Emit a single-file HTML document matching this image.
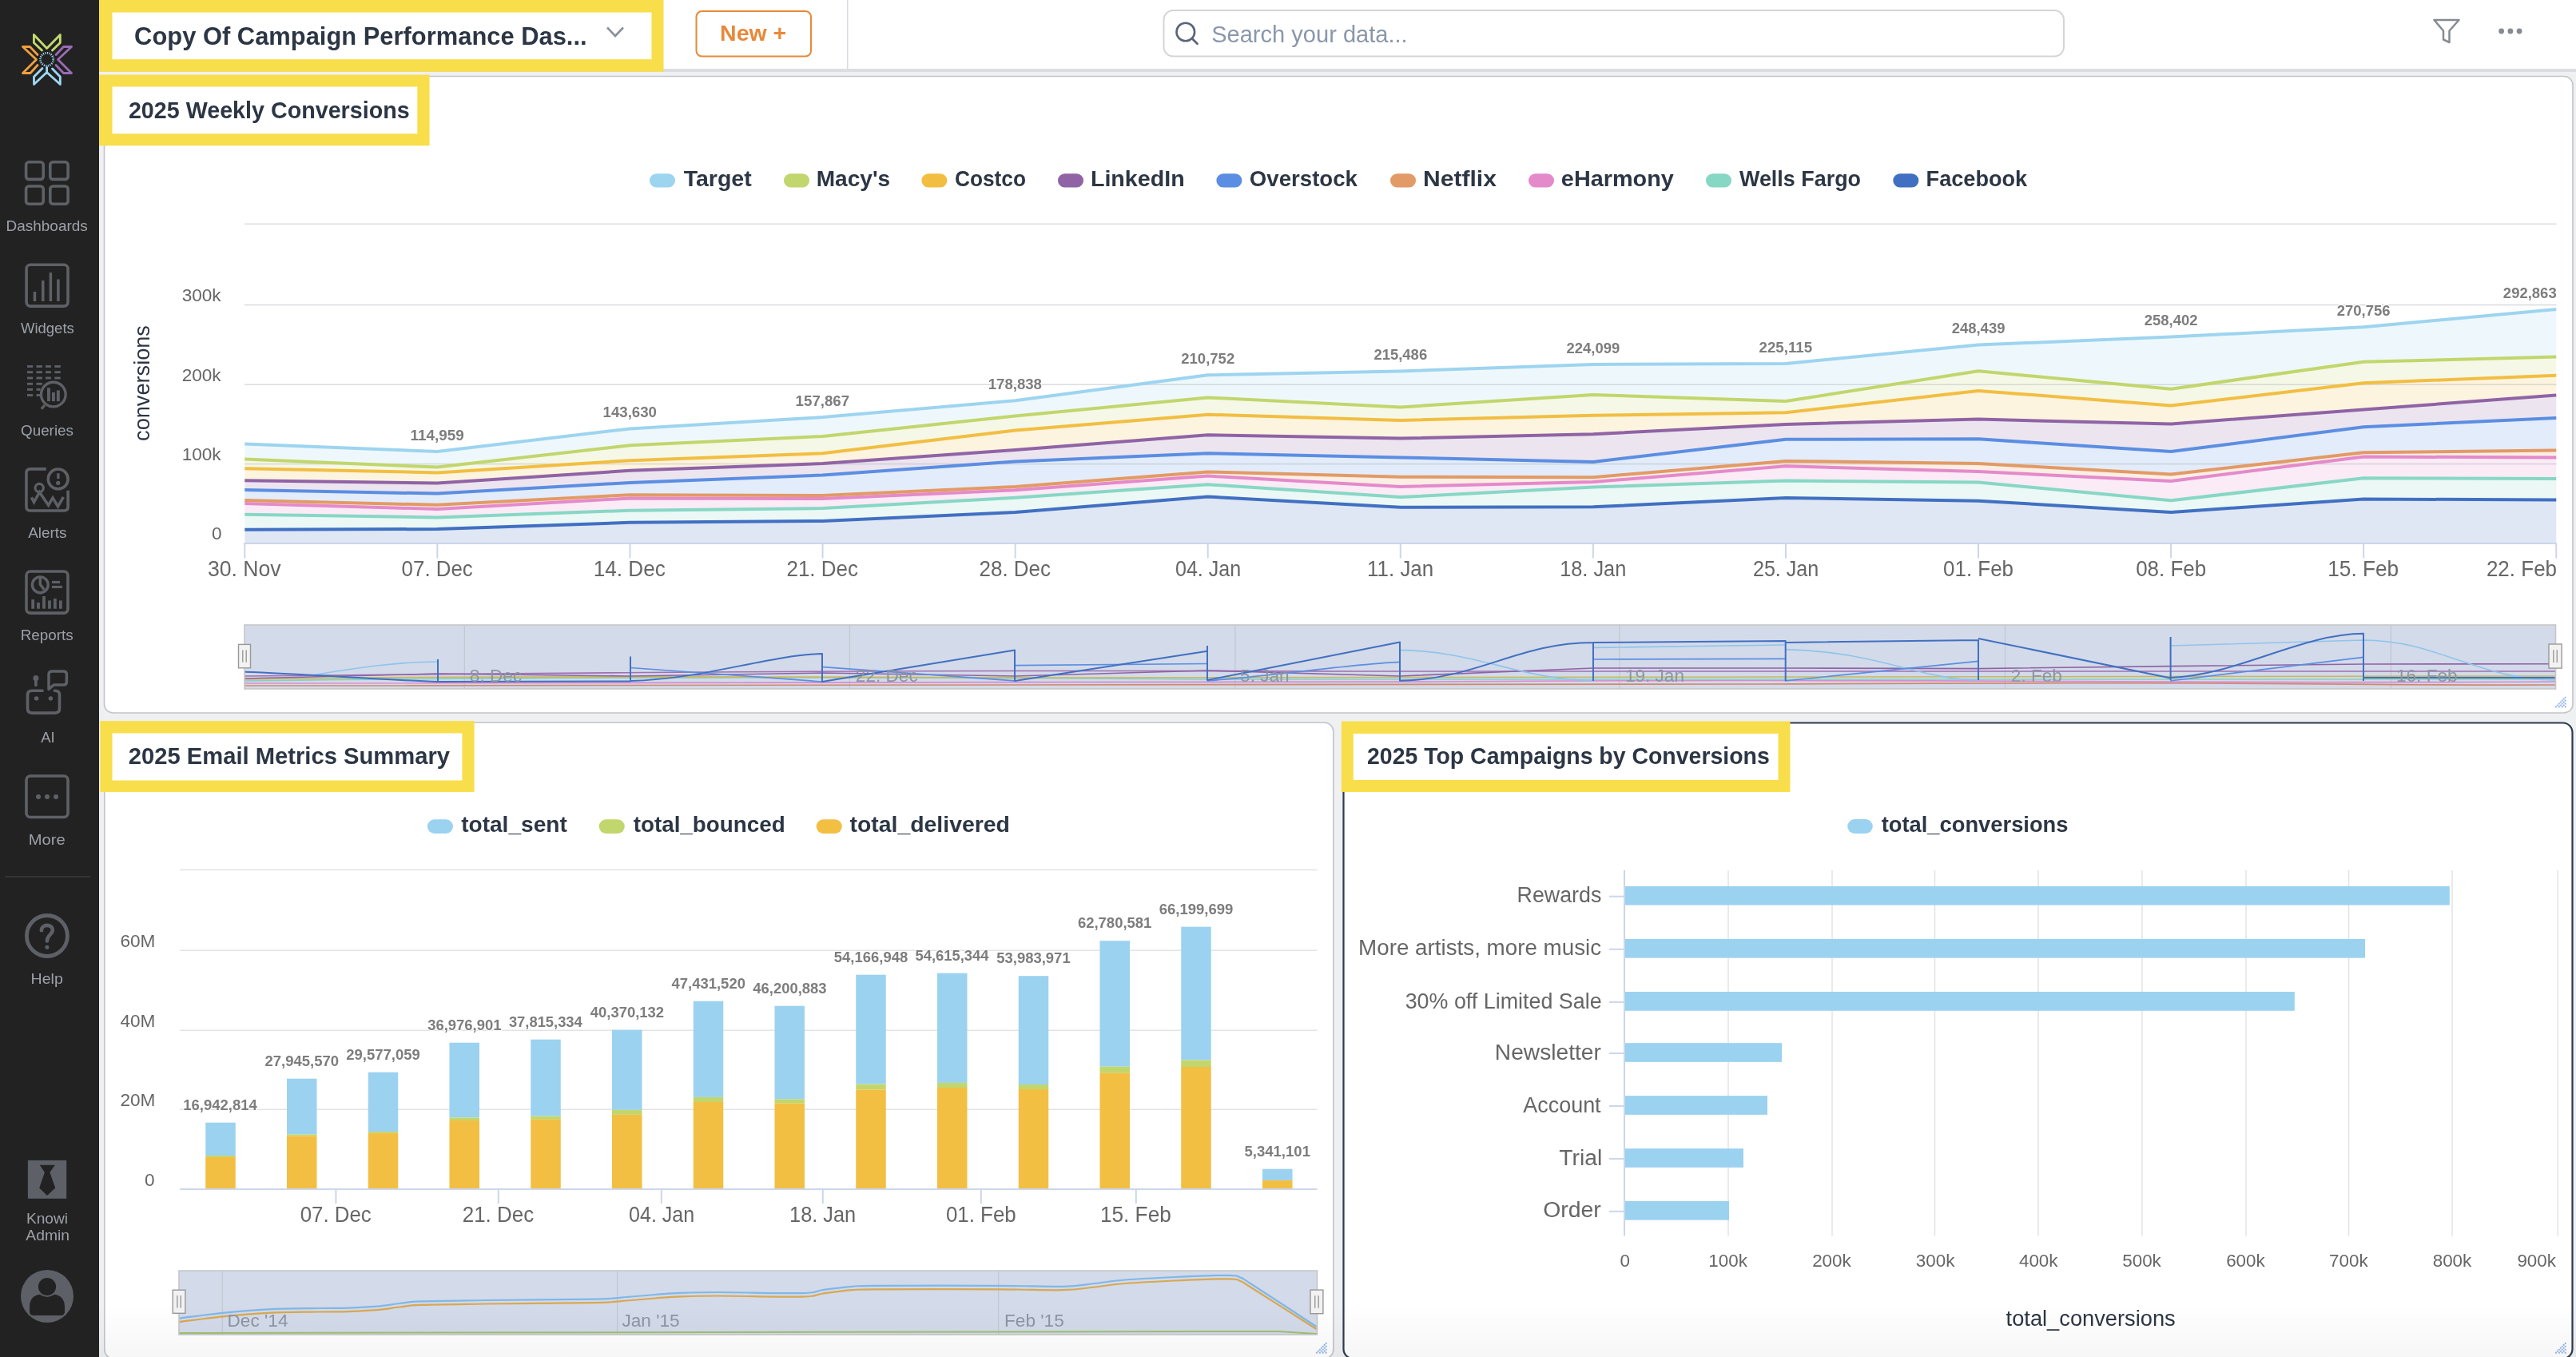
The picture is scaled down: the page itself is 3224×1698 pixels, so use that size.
<!DOCTYPE html><html><head><meta charset="utf-8"><title>Knowi Dashboard</title><style>html,body{margin:0;padding:0;background:#eff0f2;overflow:hidden;width:3224px;height:1698px}svg{display:block;will-change:transform}text{font-family:"Liberation Sans",sans-serif}</style></head><body><svg width="3224" height="1698" viewBox="0 0 3224 1698" font-family="Liberation Sans, sans-serif"><rect x="0.00" y="0.00" width="3224.00" height="1698.00" fill="#eff0f2" />
<rect x="124.00" y="0.00" width="3100.00" height="86.00" fill="#ffffff" />
<rect x="124.00" y="86.00" width="3100.00" height="4.00" fill="#dcdde1" />
<line x1="1060.75" y1="0.00" x2="1060.75" y2="86.00" stroke="#d9dadf" stroke-width="1.50" />
<rect x="130.5" y="95.5" width="3089.5" height="796.5" rx="11" fill="#fff" stroke="#c3c4c9" stroke-width="1.6"/>
<rect x="130.8" y="904.3" width="1538" height="795.5" rx="11" fill="#fff" stroke="#c3c4c9" stroke-width="1.6"/>
<rect x="1681.5" y="904.5" width="1538" height="795.5" rx="12" fill="#fff" stroke="#2e3b4e" stroke-width="2.2"/>
<rect x="124.00" y="0.00" width="706.50" height="89.80" fill="#f8de4b" />
<rect x="140.50" y="15.50" width="675.00" height="58.70" fill="#ffffff" />
<rect x="124.00" y="93.50" width="413.50" height="88.80" fill="#f8de4b" />
<rect x="140.50" y="108.50" width="381.80" height="58.80" fill="#ffffff" />
<rect x="125.30" y="902.10" width="468.30" height="89.00" fill="#f8de4b" />
<rect x="140.50" y="917.50" width="437.90" height="59.00" fill="#ffffff" />
<rect x="1678.80" y="902.50" width="561.70" height="88.50" fill="#f8de4b" />
<rect x="1693.75" y="918.00" width="531.75" height="58.00" fill="#ffffff" />
<text x="168.13" y="55.90" font-size="30.80" font-weight="bold" fill="#2c3644" textLength="566.49" lengthAdjust="spacingAndGlyphs">Copy Of Campaign Performance Das...</text>
<polyline points="760,34.5 770,45 780,34.5" fill="none" stroke="#8a9099" stroke-width="2.6"/>
<rect x="871.5" y="14" width="143.5" height="56.5" rx="7" fill="#fff" stroke="#e8893a" stroke-width="2"/>
<text x="901.10" y="51.00" font-size="27.50" font-weight="bold" fill="#e8893a" textLength="83.06" lengthAdjust="spacingAndGlyphs">New +</text>
<rect x="1456.5" y="13" width="1126.5" height="57.5" rx="12" fill="#fff" stroke="#d5d5d5" stroke-width="2"/>
<circle cx="1483.8" cy="40" r="11.3" fill="none" stroke="#5b6579" stroke-width="2.6"/>
<line x1="1492.00" y1="48.30" x2="1498.50" y2="54.70" stroke="#5b6579" stroke-width="2.80" stroke-linecap="round"/>
<text x="1516.18" y="53.00" font-size="29.00" fill="#8a97ab" textLength="245.47" lengthAdjust="spacingAndGlyphs">Search your data...</text>
<path d="M3046.5,25 L3077.5,25 L3065.5,38.5 L3065.5,53 L3058,49.5 L3058,38.5 Z" fill="none" stroke="#868b93" stroke-width="2.5" stroke-linejoin="round"/>
<circle cx="3130.6" cy="39" r="3.4" fill="#868b93"/>
<circle cx="3141.9" cy="39" r="3.4" fill="#868b93"/>
<circle cx="3153.1" cy="39" r="3.4" fill="#868b93"/>
<text x="160.91" y="147.90" font-size="28.90" font-weight="bold" fill="#2c3644" textLength="351.77" lengthAdjust="spacingAndGlyphs">2025 Weekly Conversions</text>
<text x="160.69" y="956.00" font-size="28.90" font-weight="bold" fill="#2c3644" textLength="402.37" lengthAdjust="spacingAndGlyphs">2025 Email Metrics Summary</text>
<text x="1711.02" y="956.20" font-size="28.90" font-weight="bold" fill="#2c3644" textLength="503.74" lengthAdjust="spacingAndGlyphs">2025 Top Campaigns by Conversions</text>
<rect x="813.0" y="217.3" width="32" height="17.2" rx="8.6" fill="#9dd4f0"/>
<text x="855.69" y="232.90" font-size="28.40" font-weight="bold" fill="#2c3644" textLength="85.05" lengthAdjust="spacingAndGlyphs">Target</text>
<rect x="981.0" y="217.3" width="32" height="17.2" rx="8.6" fill="#c1d66c"/>
<text x="1021.72" y="232.90" font-size="28.40" font-weight="bold" fill="#2c3644" textLength="92.43" lengthAdjust="spacingAndGlyphs">Macy&#x27;s</text>
<rect x="1153.4" y="217.3" width="32" height="17.2" rx="8.6" fill="#f2be42"/>
<text x="1194.92" y="232.90" font-size="28.40" font-weight="bold" fill="#2c3644" textLength="89.11" lengthAdjust="spacingAndGlyphs">Costco</text>
<rect x="1324.0" y="217.3" width="32" height="17.2" rx="8.6" fill="#9063a5"/>
<text x="1364.88" y="232.90" font-size="28.40" font-weight="bold" fill="#2c3644" textLength="117.90" lengthAdjust="spacingAndGlyphs">LinkedIn</text>
<rect x="1522.4" y="217.3" width="32" height="17.2" rx="8.6" fill="#5b8ee2"/>
<text x="1563.87" y="232.90" font-size="28.40" font-weight="bold" fill="#2c3644" textLength="135.11" lengthAdjust="spacingAndGlyphs">Overstock</text>
<rect x="1740.0" y="217.3" width="32" height="17.2" rx="8.6" fill="#e29a66"/>
<text x="1780.99" y="232.90" font-size="28.40" font-weight="bold" fill="#2c3644" textLength="91.93" lengthAdjust="spacingAndGlyphs">Netflix</text>
<rect x="1913.0" y="217.3" width="32" height="17.2" rx="8.6" fill="#e48acb"/>
<text x="1953.87" y="232.90" font-size="28.40" font-weight="bold" fill="#2c3644" textLength="140.98" lengthAdjust="spacingAndGlyphs">eHarmony</text>
<rect x="2135.0" y="217.3" width="32" height="17.2" rx="8.6" fill="#87d7c5"/>
<text x="2176.97" y="232.90" font-size="28.40" font-weight="bold" fill="#2c3644" textLength="152.07" lengthAdjust="spacingAndGlyphs">Wells Fargo</text>
<rect x="2369.3" y="217.3" width="32" height="17.2" rx="8.6" fill="#4170c2"/>
<text x="2410.59" y="232.90" font-size="28.40" font-weight="bold" fill="#2c3644" textLength="126.59" lengthAdjust="spacingAndGlyphs">Facebook</text>
<line x1="306.00" y1="280.30" x2="3199.50" y2="280.30" stroke="#e3e3e3" stroke-width="1.50" />
<line x1="306.00" y1="381.60" x2="3199.50" y2="381.60" stroke="#e3e3e3" stroke-width="1.50" />
<line x1="306.00" y1="481.30" x2="3199.50" y2="481.30" stroke="#e3e3e3" stroke-width="1.50" />
<line x1="306.00" y1="580.60" x2="3199.50" y2="580.60" stroke="#e3e3e3" stroke-width="1.50" />
<polygon points="306.30,555.50 547.38,565.00 788.46,536.40 1029.54,522.10 1270.62,501.20 1511.70,469.20 1752.78,464.50 1993.86,455.90 2234.94,454.90 2476.02,431.60 2717.10,421.60 2958.18,409.20 3199.26,387.10 3199.26,446.50 2958.18,452.80 2717.10,486.70 2476.02,464.30 2234.94,502.10 1993.86,494.00 1752.78,509.40 1511.70,497.50 1270.62,520.50 1029.54,545.90 788.46,557.30 547.38,584.60 306.30,574.40" fill="#9dd4f0" fill-opacity="0.17"/>
<polygon points="306.30,574.40 547.38,584.60 788.46,557.30 1029.54,545.90 1270.62,520.50 1511.70,497.50 1752.78,509.40 1993.86,494.00 2234.94,502.10 2476.02,464.30 2717.10,486.70 2958.18,452.80 3199.26,446.50 3199.26,469.80 2958.18,479.20 2717.10,507.50 2476.02,488.90 2234.94,516.30 1993.86,519.80 1752.78,526.00 1511.70,518.70 1270.62,538.60 1029.54,567.30 788.46,576.20 547.38,591.40 306.30,586.30" fill="#c1d66c" fill-opacity="0.17"/>
<polygon points="306.30,586.30 547.38,591.40 788.46,576.20 1029.54,567.30 1270.62,538.60 1511.70,518.70 1752.78,526.00 1993.86,519.80 2234.94,516.30 2476.02,488.90 2717.10,507.50 2958.18,479.20 3199.26,469.80 3199.26,494.60 2958.18,512.50 2717.10,530.50 2476.02,524.60 2234.94,530.90 1993.86,543.20 1752.78,548.50 1511.70,544.30 1270.62,563.10 1029.54,580.00 788.46,588.80 547.38,604.60 306.30,601.20" fill="#f2be42" fill-opacity="0.17"/>
<polygon points="306.30,601.20 547.38,604.60 788.46,588.80 1029.54,580.00 1270.62,563.10 1511.70,544.30 1752.78,548.50 1993.86,543.20 2234.94,530.90 2476.02,524.60 2717.10,530.50 2958.18,512.50 3199.26,494.60 3199.26,523.00 2958.18,534.30 2717.10,565.10 2476.02,549.30 2234.94,549.80 1993.86,578.00 1752.78,572.40 1511.70,567.30 1270.62,577.50 1029.54,594.50 788.46,603.90 547.38,617.60 306.30,613.10" fill="#9063a5" fill-opacity="0.17"/>
<polygon points="306.30,613.10 547.38,617.60 788.46,603.90 1029.54,594.50 1270.62,577.50 1511.70,567.30 1752.78,572.40 1993.86,578.00 2234.94,549.80 2476.02,549.30 2717.10,565.10 2958.18,534.30 3199.26,523.00 3199.26,563.60 2958.18,566.20 2717.10,593.50 2476.02,580.00 2234.94,576.90 1993.86,597.20 1752.78,596.70 1511.70,590.50 1270.62,608.90 1029.54,620.00 788.46,619.20 547.38,631.80 306.30,626.10" fill="#5b8ee2" fill-opacity="0.17"/>
<polygon points="306.30,626.10 547.38,631.80 788.46,619.20 1029.54,620.00 1270.62,608.90 1511.70,590.50 1752.78,596.70 1993.86,597.20 2234.94,576.90 2476.02,580.00 2717.10,593.50 2958.18,566.20 3199.26,563.60 3199.26,572.50 2958.18,571.50 2717.10,601.90 2476.02,590.10 2234.94,583.30 1993.86,603.00 1752.78,608.90 1511.70,595.60 1270.62,613.30 1029.54,624.00 788.46,623.40 547.38,637.00 306.30,630.10" fill="#e29a66" fill-opacity="0.17"/>
<polygon points="306.30,630.10 547.38,637.00 788.46,623.40 1029.54,624.00 1270.62,613.30 1511.70,595.60 1752.78,608.90 1993.86,603.00 2234.94,583.30 2476.02,590.10 2717.10,601.90 2958.18,571.50 3199.26,572.50 3199.26,599.00 2958.18,598.30 2717.10,626.30 2476.02,603.40 2234.94,601.60 1993.86,609.50 1752.78,622.10 1511.70,606.30 1270.62,622.80 1029.54,636.00 788.46,638.70 547.38,647.40 306.30,643.70" fill="#e48acb" fill-opacity="0.17"/>
<polygon points="306.30,643.70 547.38,647.40 788.46,638.70 1029.54,636.00 1270.62,622.80 1511.70,606.30 1752.78,622.10 1993.86,609.50 2234.94,601.60 2476.02,603.40 2717.10,626.30 2958.18,598.30 3199.26,599.00 3199.26,625.50 2958.18,624.50 2717.10,641.00 2476.02,626.70 2234.94,622.90 1993.86,634.30 1752.78,634.70 1511.70,621.50 1270.62,641.00 1029.54,652.00 788.46,653.80 547.38,662.00 306.30,662.80" fill="#87d7c5" fill-opacity="0.17"/>
<polygon points="306.30,662.80 547.38,662.00 788.46,653.80 1029.54,652.00 1270.62,641.00 1511.70,621.50 1752.78,634.70 1993.86,634.30 2234.94,622.90 2476.02,626.70 2717.10,641.00 2958.18,624.50 3199.26,625.50 3199.26,680.00 306.30,680.00" fill="#4170c2" fill-opacity="0.17"/>
<line x1="306.00" y1="280.30" x2="3199.50" y2="280.30" stroke="#d0d3d8" stroke-width="1.20" stroke-opacity="0.45"/>
<line x1="306.00" y1="381.60" x2="3199.50" y2="381.60" stroke="#d0d3d8" stroke-width="1.20" stroke-opacity="0.45"/>
<line x1="306.00" y1="481.30" x2="3199.50" y2="481.30" stroke="#d0d3d8" stroke-width="1.20" stroke-opacity="0.45"/>
<line x1="306.00" y1="580.60" x2="3199.50" y2="580.60" stroke="#d0d3d8" stroke-width="1.20" stroke-opacity="0.45"/>
<polyline points="306.30,662.80 547.38,662.00 788.46,653.80 1029.54,652.00 1270.62,641.00 1511.70,621.50 1752.78,634.70 1993.86,634.30 2234.94,622.90 2476.02,626.70 2717.10,641.00 2958.18,624.50 3199.26,625.50" fill="none" stroke="#4170c2" stroke-width="4" stroke-linejoin="round"/>
<polyline points="306.30,643.70 547.38,647.40 788.46,638.70 1029.54,636.00 1270.62,622.80 1511.70,606.30 1752.78,622.10 1993.86,609.50 2234.94,601.60 2476.02,603.40 2717.10,626.30 2958.18,598.30 3199.26,599.00" fill="none" stroke="#87d7c5" stroke-width="4" stroke-linejoin="round"/>
<polyline points="306.30,630.10 547.38,637.00 788.46,623.40 1029.54,624.00 1270.62,613.30 1511.70,595.60 1752.78,608.90 1993.86,603.00 2234.94,583.30 2476.02,590.10 2717.10,601.90 2958.18,571.50 3199.26,572.50" fill="none" stroke="#e48acb" stroke-width="4" stroke-linejoin="round"/>
<polyline points="306.30,626.10 547.38,631.80 788.46,619.20 1029.54,620.00 1270.62,608.90 1511.70,590.50 1752.78,596.70 1993.86,597.20 2234.94,576.90 2476.02,580.00 2717.10,593.50 2958.18,566.20 3199.26,563.60" fill="none" stroke="#e29a66" stroke-width="4" stroke-linejoin="round"/>
<polyline points="306.30,613.10 547.38,617.60 788.46,603.90 1029.54,594.50 1270.62,577.50 1511.70,567.30 1752.78,572.40 1993.86,578.00 2234.94,549.80 2476.02,549.30 2717.10,565.10 2958.18,534.30 3199.26,523.00" fill="none" stroke="#5b8ee2" stroke-width="4" stroke-linejoin="round"/>
<polyline points="306.30,601.20 547.38,604.60 788.46,588.80 1029.54,580.00 1270.62,563.10 1511.70,544.30 1752.78,548.50 1993.86,543.20 2234.94,530.90 2476.02,524.60 2717.10,530.50 2958.18,512.50 3199.26,494.60" fill="none" stroke="#9063a5" stroke-width="4" stroke-linejoin="round"/>
<polyline points="306.30,586.30 547.38,591.40 788.46,576.20 1029.54,567.30 1270.62,538.60 1511.70,518.70 1752.78,526.00 1993.86,519.80 2234.94,516.30 2476.02,488.90 2717.10,507.50 2958.18,479.20 3199.26,469.80" fill="none" stroke="#f2be42" stroke-width="4" stroke-linejoin="round"/>
<polyline points="306.30,574.40 547.38,584.60 788.46,557.30 1029.54,545.90 1270.62,520.50 1511.70,497.50 1752.78,509.40 1993.86,494.00 2234.94,502.10 2476.02,464.30 2717.10,486.70 2958.18,452.80 3199.26,446.50" fill="none" stroke="#c1d66c" stroke-width="4" stroke-linejoin="round"/>
<polyline points="306.30,555.50 547.38,565.00 788.46,536.40 1029.54,522.10 1270.62,501.20 1511.70,469.20 1752.78,464.50 1993.86,455.90 2234.94,454.90 2476.02,431.60 2717.10,421.60 2958.18,409.20 3199.26,387.10" fill="none" stroke="#9dd4f0" stroke-width="4" stroke-linejoin="round"/>
<line x1="305.00" y1="680.00" x2="3200.00" y2="680.00" stroke="#ccd6eb" stroke-width="2.00" />
<line x1="306.30" y1="680.00" x2="306.30" y2="698.50" stroke="#ccd6eb" stroke-width="2.00" />
<line x1="547.38" y1="680.00" x2="547.38" y2="698.50" stroke="#ccd6eb" stroke-width="2.00" />
<line x1="788.46" y1="680.00" x2="788.46" y2="698.50" stroke="#ccd6eb" stroke-width="2.00" />
<line x1="1029.54" y1="680.00" x2="1029.54" y2="698.50" stroke="#ccd6eb" stroke-width="2.00" />
<line x1="1270.62" y1="680.00" x2="1270.62" y2="698.50" stroke="#ccd6eb" stroke-width="2.00" />
<line x1="1511.70" y1="680.00" x2="1511.70" y2="698.50" stroke="#ccd6eb" stroke-width="2.00" />
<line x1="1752.78" y1="680.00" x2="1752.78" y2="698.50" stroke="#ccd6eb" stroke-width="2.00" />
<line x1="1993.86" y1="680.00" x2="1993.86" y2="698.50" stroke="#ccd6eb" stroke-width="2.00" />
<line x1="2234.94" y1="680.00" x2="2234.94" y2="698.50" stroke="#ccd6eb" stroke-width="2.00" />
<line x1="2476.02" y1="680.00" x2="2476.02" y2="698.50" stroke="#ccd6eb" stroke-width="2.00" />
<line x1="2717.10" y1="680.00" x2="2717.10" y2="698.50" stroke="#ccd6eb" stroke-width="2.00" />
<line x1="2958.18" y1="680.00" x2="2958.18" y2="698.50" stroke="#ccd6eb" stroke-width="2.00" />
<line x1="3199.26" y1="680.00" x2="3199.26" y2="698.50" stroke="#ccd6eb" stroke-width="2.00" />
<text x="227.66" y="377.10" font-size="22.60" fill="#666666" textLength="49.01" lengthAdjust="spacingAndGlyphs">300k</text>
<text x="227.66" y="476.90" font-size="22.60" fill="#666666" textLength="49.01" lengthAdjust="spacingAndGlyphs">200k</text>
<text x="227.66" y="575.70" font-size="22.60" fill="#666666" textLength="49.01" lengthAdjust="spacingAndGlyphs">100k</text>
<text x="265.01" y="674.60" font-size="22.60" fill="#666666" textLength="12.57" lengthAdjust="spacingAndGlyphs">0</text>
<g transform="translate(187.4,479.4) rotate(-90)"><text x="-72.50" y="0.00" font-size="27.20" fill="#2c3644" textLength="144.83" lengthAdjust="spacingAndGlyphs">conversions</text></g>
<text x="259.99" y="721.20" font-size="27.40" fill="#666666" textLength="91.70" lengthAdjust="spacingAndGlyphs">30. Nov</text>
<text x="502.62" y="721.20" font-size="27.40" fill="#666666" textLength="89.19" lengthAdjust="spacingAndGlyphs">07. Dec</text>
<text x="742.72" y="721.20" font-size="27.40" fill="#666666" textLength="90.18" lengthAdjust="spacingAndGlyphs">14. Dec</text>
<text x="984.48" y="721.20" font-size="27.40" fill="#666666" textLength="89.49" lengthAdjust="spacingAndGlyphs">21. Dec</text>
<text x="1225.56" y="721.20" font-size="27.40" fill="#666666" textLength="89.49" lengthAdjust="spacingAndGlyphs">28. Dec</text>
<text x="1470.97" y="721.20" font-size="27.40" fill="#666666" textLength="82.10" lengthAdjust="spacingAndGlyphs">04. Jan</text>
<text x="1711.10" y="721.20" font-size="27.40" fill="#666666" textLength="83.07" lengthAdjust="spacingAndGlyphs">11. Jan</text>
<text x="1952.18" y="721.20" font-size="27.40" fill="#666666" textLength="83.07" lengthAdjust="spacingAndGlyphs">18. Jan</text>
<text x="2193.93" y="721.20" font-size="27.40" fill="#666666" textLength="82.39" lengthAdjust="spacingAndGlyphs">25. Jan</text>
<text x="2432.11" y="721.20" font-size="27.40" fill="#666666" textLength="87.90" lengthAdjust="spacingAndGlyphs">01. Feb</text>
<text x="2673.19" y="721.20" font-size="27.40" fill="#666666" textLength="87.90" lengthAdjust="spacingAndGlyphs">08. Feb</text>
<text x="2913.28" y="721.20" font-size="27.40" fill="#666666" textLength="88.90" lengthAdjust="spacingAndGlyphs">15. Feb</text>
<text x="3111.89" y="721.20" font-size="27.40" fill="#666666" textLength="88.20" lengthAdjust="spacingAndGlyphs">22. Feb</text>
<text x="513.46" y="550.60" font-size="18.40" font-weight="bold" fill="#7d7d7d" textLength="67.37" lengthAdjust="spacingAndGlyphs" stroke="#fff" stroke-width="2" paint-order="stroke" stroke-linejoin="round">114,959</text>
<text x="754.53" y="522.00" font-size="18.40" font-weight="bold" fill="#7d7d7d" textLength="67.44" lengthAdjust="spacingAndGlyphs" stroke="#fff" stroke-width="2" paint-order="stroke" stroke-linejoin="round">143,630</text>
<text x="995.61" y="507.70" font-size="18.40" font-weight="bold" fill="#7d7d7d" textLength="67.50" lengthAdjust="spacingAndGlyphs" stroke="#fff" stroke-width="2" paint-order="stroke" stroke-linejoin="round">157,867</text>
<text x="1236.70" y="486.80" font-size="18.40" font-weight="bold" fill="#7d7d7d" textLength="67.24" lengthAdjust="spacingAndGlyphs" stroke="#fff" stroke-width="2" paint-order="stroke" stroke-linejoin="round">178,838</text>
<text x="1478.31" y="454.80" font-size="18.40" font-weight="bold" fill="#7d7d7d" textLength="66.88" lengthAdjust="spacingAndGlyphs" stroke="#fff" stroke-width="2" paint-order="stroke" stroke-linejoin="round">210,752</text>
<text x="1719.39" y="450.10" font-size="18.40" font-weight="bold" fill="#7d7d7d" textLength="66.81" lengthAdjust="spacingAndGlyphs" stroke="#fff" stroke-width="2" paint-order="stroke" stroke-linejoin="round">215,486</text>
<text x="1960.47" y="441.50" font-size="18.40" font-weight="bold" fill="#7d7d7d" textLength="66.83" lengthAdjust="spacingAndGlyphs" stroke="#fff" stroke-width="2" paint-order="stroke" stroke-linejoin="round">224,099</text>
<text x="2201.55" y="440.50" font-size="18.40" font-weight="bold" fill="#7d7d7d" textLength="66.65" lengthAdjust="spacingAndGlyphs" stroke="#fff" stroke-width="2" paint-order="stroke" stroke-linejoin="round">225,115</text>
<text x="2442.63" y="417.20" font-size="18.40" font-weight="bold" fill="#7d7d7d" textLength="66.83" lengthAdjust="spacingAndGlyphs" stroke="#fff" stroke-width="2" paint-order="stroke" stroke-linejoin="round">248,439</text>
<text x="2683.71" y="407.20" font-size="18.40" font-weight="bold" fill="#7d7d7d" textLength="66.88" lengthAdjust="spacingAndGlyphs" stroke="#fff" stroke-width="2" paint-order="stroke" stroke-linejoin="round">258,402</text>
<text x="2924.79" y="394.80" font-size="18.40" font-weight="bold" fill="#7d7d7d" textLength="66.81" lengthAdjust="spacingAndGlyphs" stroke="#fff" stroke-width="2" paint-order="stroke" stroke-linejoin="round">270,756</text>
<text x="3132.86" y="372.70" font-size="18.40" font-weight="bold" fill="#7d7d7d" textLength="66.81" lengthAdjust="spacingAndGlyphs" stroke="#fff" stroke-width="2" paint-order="stroke" stroke-linejoin="round">292,863</text>
<rect x="306" y="782" width="2892.5" height="80" fill="#d3dae9"/>
<line x1="581.30" y1="782.00" x2="581.30" y2="862.00" stroke="#c3c8d2" stroke-width="1.30" />
<line x1="1063.40" y1="782.00" x2="1063.40" y2="862.00" stroke="#c3c8d2" stroke-width="1.30" />
<line x1="1545.90" y1="782.00" x2="1545.90" y2="862.00" stroke="#c3c8d2" stroke-width="1.30" />
<line x1="2027.00" y1="782.00" x2="2027.00" y2="862.00" stroke="#c3c8d2" stroke-width="1.30" />
<line x1="2509.50" y1="782.00" x2="2509.50" y2="862.00" stroke="#c3c8d2" stroke-width="1.30" />
<line x1="2992.30" y1="782.00" x2="2992.30" y2="862.00" stroke="#c3c8d2" stroke-width="1.30" />
<path d="M306,858 C900,855 1500,860 2200,856 S2900,858 3198,857" fill="none" stroke="#d08a6a" stroke-width="1.70" stroke-linejoin="round" />
<path d="M306,855 C700,850 1200,858 1800,853 S2700,856 3198,853" fill="none" stroke="#d98ad0" stroke-width="1.70" stroke-linejoin="round" />
<path d="M306,852 C600,848 1000,846 1500,850 S2500,845 3198,850" fill="none" stroke="#88cfc0" stroke-width="1.70" stroke-linejoin="round" />
<path d="M306,850 C500,846 800,846 1300,848 S2300,842 3198,846" fill="none" stroke="#c8b860" stroke-width="1.60" stroke-linejoin="round" />
<path d="M306,846 C700,842 1100,838 1700,840 S2600,838 3198,840" fill="none" stroke="#a070b0" stroke-width="1.60" stroke-linejoin="round" />
<path d="M306,849 L548,843 L789,846 L1030,842 L1270,846 L1512,839 L1752,846 L1994,836 L2234,836 L2476,836.6 L2716,833.6 L2958,831 L3198,830.7" fill="none" stroke="#9063a5" stroke-width="1.60" stroke-linejoin="round" />
<path d="M390,845 C450,835 500,828 548,828" fill="none" stroke="#8ec5ea" stroke-width="1.60" stroke-linejoin="round" />
<path d="M1752,813.4 C1850,815 1900,850 1994,851.8 M1994,810.4 L2234,807 M2234,812.6 C2350,815 2400,850 2476,851 M2716,808 L2958,801 C3050,801 3100,850 3198,851" fill="none" stroke="#8ec5ea" stroke-width="1.60" stroke-linejoin="round" />
<path d="M789,835.5 L1029,853 M1030,834.7 L1270,851.8 M1270,832.6 L1511,830.5 M1511,851.8 C1600,845 1700,830 1752,828.3 M1994,825 L2234,824.4 M2234,852 L2476,827.4 M2716,852 L2958,822.3" fill="none" stroke="#5b8ee2" stroke-width="1.70" stroke-linejoin="round" />
<path d="M306,840.7 C380,843 480,851 548,853 M548,825 L548,853 L789,852.5 M789,821.5 L789,852 C880,850 960,820 1029,818 L1029,853 L1270,813.4 L1270,852 L1511,814.7 M1511,808 L1511,851 L1752,803.5 L1752,851.8 C1850,850 1900,804 1994,804 L1994,852 M1994,804 L2234.7,802 L2234.7,852 M2234.7,804 L2476,801 L2476,851 M2476,799 L2716.6,848.4 M2716.6,797 L2716.6,851 M2716.6,848 C2800,845 2880,793 2958,792.8 L2958,852 M2958,848 L3198,848" fill="none" stroke="#4170c2" stroke-width="2.00" stroke-linejoin="round" />
<text x="587.82" y="852.50" font-size="22.60" fill="#8e95a2" textLength="65.32" lengthAdjust="spacingAndGlyphs">8. Dec</text>
<text x="1070.86" y="852.50" font-size="22.60" fill="#8e95a2" textLength="77.89" lengthAdjust="spacingAndGlyphs">22. Dec</text>
<text x="1552.10" y="852.50" font-size="22.60" fill="#8e95a2" textLength="61.57" lengthAdjust="spacingAndGlyphs">5. Jan</text>
<text x="2033.88" y="852.50" font-size="22.60" fill="#8e95a2" textLength="74.13" lengthAdjust="spacingAndGlyphs">19. Jan</text>
<text x="2516.86" y="852.50" font-size="22.60" fill="#8e95a2" textLength="64.07" lengthAdjust="spacingAndGlyphs">2. Feb</text>
<text x="2998.98" y="852.50" font-size="22.60" fill="#8e95a2" textLength="76.64" lengthAdjust="spacingAndGlyphs">16. Feb</text>
<rect x="306" y="782" width="2892.5" height="80" fill="none" stroke="#c6c6c6" stroke-width="1.6"/>
<rect x="298.50" y="806.40" width="15.00" height="29.40" fill="#f2f2f2" stroke="#999" stroke-width="1.4"/>
<line x1="303.80" y1="813.40" x2="303.80" y2="828.80" stroke="#999" stroke-width="1.40" />
<line x1="308.20" y1="813.40" x2="308.20" y2="828.80" stroke="#999" stroke-width="1.40" />
<rect x="3190.00" y="806.00" width="16.10" height="30.10" fill="#f2f2f2" stroke="#999" stroke-width="1.4"/>
<line x1="3195.85" y1="813.17" x2="3195.85" y2="828.92" stroke="#999" stroke-width="1.40" />
<line x1="3200.25" y1="813.17" x2="3200.25" y2="828.92" stroke="#999" stroke-width="1.40" />
<g fill="#7fa8e6" fill-opacity="0.85"><circle cx="3198.95" cy="884.45" r="1.1"/><circle cx="3200.90" cy="882.50" r="1.1"/><circle cx="3202.85" cy="880.55" r="1.1"/><circle cx="3202.85" cy="884.45" r="1.1"/><circle cx="3204.80" cy="878.60" r="1.1"/><circle cx="3204.80" cy="882.50" r="1.1"/><circle cx="3206.75" cy="876.65" r="1.1"/><circle cx="3206.75" cy="880.55" r="1.1"/><circle cx="3206.75" cy="884.45" r="1.1"/><circle cx="3208.70" cy="874.70" r="1.1"/><circle cx="3208.70" cy="878.60" r="1.1"/><circle cx="3208.70" cy="882.50" r="1.1"/><circle cx="3210.65" cy="872.75" r="1.1"/><circle cx="3210.65" cy="876.65" r="1.1"/><circle cx="3210.65" cy="880.55" r="1.1"/><circle cx="3210.65" cy="884.45" r="1.1"/></g>
<rect x="534.8" y="1025.3" width="32.2" height="17.6" rx="8.8" fill="#9bd2f0"/>
<text x="577.16" y="1041.00" font-size="28.40" font-weight="bold" fill="#2c3644" textLength="132.59" lengthAdjust="spacingAndGlyphs">total_sent</text>
<rect x="749.6" y="1025.3" width="32.2" height="17.6" rx="8.8" fill="#c2d66e"/>
<text x="792.66" y="1041.00" font-size="28.40" font-weight="bold" fill="#2c3644" textLength="190.07" lengthAdjust="spacingAndGlyphs">total_bounced</text>
<rect x="1021.6" y="1025.3" width="32.2" height="17.6" rx="8.8" fill="#f2bf43"/>
<text x="1063.45" y="1041.00" font-size="28.40" font-weight="bold" fill="#2c3644" textLength="200.52" lengthAdjust="spacingAndGlyphs">total_delivered</text>
<line x1="225.00" y1="1088.50" x2="1648.50" y2="1088.50" stroke="#e3e3e3" stroke-width="1.50" />
<line x1="225.00" y1="1189.30" x2="1648.50" y2="1189.30" stroke="#e3e3e3" stroke-width="1.50" />
<line x1="225.00" y1="1289.30" x2="1648.50" y2="1289.30" stroke="#e3e3e3" stroke-width="1.50" />
<line x1="225.00" y1="1388.30" x2="1648.50" y2="1388.30" stroke="#e3e3e3" stroke-width="1.50" />
<text x="150.49" y="1185.00" font-size="22.60" fill="#666666" textLength="43.96" lengthAdjust="spacingAndGlyphs">60M</text>
<text x="150.49" y="1285.00" font-size="22.60" fill="#666666" textLength="43.96" lengthAdjust="spacingAndGlyphs">40M</text>
<text x="150.49" y="1384.00" font-size="22.60" fill="#666666" textLength="43.96" lengthAdjust="spacingAndGlyphs">20M</text>
<text x="180.91" y="1483.60" font-size="22.60" fill="#666666" textLength="12.57" lengthAdjust="spacingAndGlyphs">0</text>
<rect x="257.25" y="1404.70" width="37.50" height="41.30" fill="#9bd2f0" />
<rect x="257.25" y="1446.00" width="37.50" height="2.00" fill="#c2d66e" />
<rect x="257.25" y="1448.00" width="37.50" height="40.00" fill="#f2bf43" />
<text x="229.19" y="1388.70" font-size="18.60" font-weight="bold" fill="#7d7d7d" textLength="92.56" lengthAdjust="spacingAndGlyphs" stroke="#fff" stroke-width="2" paint-order="stroke" stroke-linejoin="round">16,942,814</text>
<rect x="359.00" y="1349.70" width="37.50" height="69.80" fill="#9bd2f0" />
<rect x="359.00" y="1419.50" width="37.50" height="1.90" fill="#c2d66e" />
<rect x="359.00" y="1421.40" width="37.50" height="66.60" fill="#f2bf43" />
<text x="331.46" y="1333.70" font-size="18.60" font-weight="bold" fill="#7d7d7d" textLength="92.70" lengthAdjust="spacingAndGlyphs" stroke="#fff" stroke-width="2" paint-order="stroke" stroke-linejoin="round">27,945,570</text>
<rect x="460.75" y="1341.70" width="37.50" height="74.30" fill="#9bd2f0" />
<rect x="460.75" y="1416.00" width="37.50" height="1.80" fill="#c2d66e" />
<rect x="460.75" y="1417.80" width="37.50" height="70.20" fill="#f2bf43" />
<text x="433.21" y="1325.70" font-size="18.60" font-weight="bold" fill="#7d7d7d" textLength="92.63" lengthAdjust="spacingAndGlyphs" stroke="#fff" stroke-width="2" paint-order="stroke" stroke-linejoin="round">29,577,059</text>
<rect x="562.50" y="1304.70" width="37.50" height="93.70" fill="#9bd2f0" />
<rect x="562.50" y="1398.40" width="37.50" height="3.60" fill="#c2d66e" />
<rect x="562.50" y="1402.00" width="37.50" height="86.00" fill="#f2bf43" />
<text x="535.18" y="1288.70" font-size="18.60" font-weight="bold" fill="#7d7d7d" textLength="92.24" lengthAdjust="spacingAndGlyphs" stroke="#fff" stroke-width="2" paint-order="stroke" stroke-linejoin="round">36,976,901</text>
<rect x="664.25" y="1300.70" width="37.50" height="95.90" fill="#9bd2f0" />
<rect x="664.25" y="1396.60" width="37.50" height="4.20" fill="#c2d66e" />
<rect x="664.25" y="1400.80" width="37.50" height="87.20" fill="#f2bf43" />
<text x="636.93" y="1284.70" font-size="18.60" font-weight="bold" fill="#7d7d7d" textLength="91.82" lengthAdjust="spacingAndGlyphs" stroke="#fff" stroke-width="2" paint-order="stroke" stroke-linejoin="round">37,815,334</text>
<rect x="766.00" y="1288.70" width="37.50" height="100.10" fill="#9bd2f0" />
<rect x="766.00" y="1388.80" width="37.50" height="6.10" fill="#c2d66e" />
<rect x="766.00" y="1394.90" width="37.50" height="93.10" fill="#f2bf43" />
<text x="738.82" y="1272.70" font-size="18.60" font-weight="bold" fill="#7d7d7d" textLength="92.32" lengthAdjust="spacingAndGlyphs" stroke="#fff" stroke-width="2" paint-order="stroke" stroke-linejoin="round">40,370,132</text>
<rect x="867.75" y="1252.70" width="37.50" height="120.20" fill="#9bd2f0" />
<rect x="867.75" y="1372.90" width="37.50" height="6.10" fill="#c2d66e" />
<rect x="867.75" y="1379.00" width="37.50" height="109.00" fill="#f2bf43" />
<text x="840.57" y="1236.70" font-size="18.60" font-weight="bold" fill="#7d7d7d" textLength="92.34" lengthAdjust="spacingAndGlyphs" stroke="#fff" stroke-width="2" paint-order="stroke" stroke-linejoin="round">47,431,520</text>
<rect x="969.50" y="1258.70" width="37.50" height="116.60" fill="#9bd2f0" />
<rect x="969.50" y="1375.30" width="37.50" height="5.40" fill="#c2d66e" />
<rect x="969.50" y="1380.70" width="37.50" height="107.30" fill="#f2bf43" />
<text x="942.32" y="1242.70" font-size="18.60" font-weight="bold" fill="#7d7d7d" textLength="92.24" lengthAdjust="spacingAndGlyphs" stroke="#fff" stroke-width="2" paint-order="stroke" stroke-linejoin="round">46,200,883</text>
<rect x="1071.25" y="1219.70" width="37.50" height="136.90" fill="#9bd2f0" />
<rect x="1071.25" y="1356.60" width="37.50" height="6.80" fill="#c2d66e" />
<rect x="1071.25" y="1363.40" width="37.50" height="124.60" fill="#f2bf43" />
<text x="1043.78" y="1203.70" font-size="18.60" font-weight="bold" fill="#7d7d7d" textLength="92.44" lengthAdjust="spacingAndGlyphs" stroke="#fff" stroke-width="2" paint-order="stroke" stroke-linejoin="round">54,166,948</text>
<rect x="1173.00" y="1217.70" width="37.50" height="137.20" fill="#9bd2f0" />
<rect x="1173.00" y="1354.90" width="37.50" height="6.10" fill="#c2d66e" />
<rect x="1173.00" y="1361.00" width="37.50" height="127.00" fill="#f2bf43" />
<text x="1145.53" y="1201.70" font-size="18.60" font-weight="bold" fill="#7d7d7d" textLength="91.96" lengthAdjust="spacingAndGlyphs" stroke="#fff" stroke-width="2" paint-order="stroke" stroke-linejoin="round">54,615,344</text>
<rect x="1274.75" y="1221.20" width="37.50" height="135.80" fill="#9bd2f0" />
<rect x="1274.75" y="1357.00" width="37.50" height="6.00" fill="#c2d66e" />
<rect x="1274.75" y="1363.00" width="37.50" height="125.00" fill="#f2bf43" />
<text x="1247.28" y="1205.20" font-size="18.60" font-weight="bold" fill="#7d7d7d" textLength="92.38" lengthAdjust="spacingAndGlyphs" stroke="#fff" stroke-width="2" paint-order="stroke" stroke-linejoin="round">53,983,971</text>
<rect x="1376.50" y="1177.20" width="37.50" height="157.50" fill="#9bd2f0" />
<rect x="1376.50" y="1334.70" width="37.50" height="8.10" fill="#c2d66e" />
<rect x="1376.50" y="1342.80" width="37.50" height="145.20" fill="#f2bf43" />
<text x="1348.92" y="1161.20" font-size="18.60" font-weight="bold" fill="#7d7d7d" textLength="92.49" lengthAdjust="spacingAndGlyphs" stroke="#fff" stroke-width="2" paint-order="stroke" stroke-linejoin="round">62,780,581</text>
<rect x="1478.25" y="1159.70" width="37.50" height="166.80" fill="#9bd2f0" />
<rect x="1478.25" y="1326.50" width="37.50" height="8.50" fill="#c2d66e" />
<rect x="1478.25" y="1335.00" width="37.50" height="153.00" fill="#f2bf43" />
<text x="1450.67" y="1143.70" font-size="18.60" font-weight="bold" fill="#7d7d7d" textLength="92.67" lengthAdjust="spacingAndGlyphs" stroke="#fff" stroke-width="2" paint-order="stroke" stroke-linejoin="round">66,199,699</text>
<rect x="1580.00" y="1462.70" width="37.50" height="14.20" fill="#9bd2f0" />
<rect x="1580.00" y="1476.90" width="37.50" height="0.00" fill="#c2d66e" />
<rect x="1580.00" y="1476.90" width="37.50" height="11.10" fill="#f2bf43" />
<text x="1557.48" y="1446.70" font-size="18.60" font-weight="bold" fill="#7d7d7d" textLength="82.49" lengthAdjust="spacingAndGlyphs" stroke="#fff" stroke-width="2" paint-order="stroke" stroke-linejoin="round">5,341,101</text>
<line x1="225.00" y1="1488.00" x2="1648.50" y2="1488.00" stroke="#ccd6eb" stroke-width="2.00" />
<line x1="420.40" y1="1488.00" x2="420.40" y2="1506.00" stroke="#ccd6eb" stroke-width="2.00" />
<text x="375.64" y="1528.50" font-size="27.40" fill="#666666" textLength="89.19" lengthAdjust="spacingAndGlyphs">07. Dec</text>
<line x1="623.80" y1="1488.00" x2="623.80" y2="1506.00" stroke="#ccd6eb" stroke-width="2.00" />
<text x="578.74" y="1528.50" font-size="27.40" fill="#666666" textLength="89.49" lengthAdjust="spacingAndGlyphs">21. Dec</text>
<line x1="827.80" y1="1488.00" x2="827.80" y2="1506.00" stroke="#ccd6eb" stroke-width="2.00" />
<text x="787.07" y="1528.50" font-size="27.40" fill="#666666" textLength="82.10" lengthAdjust="spacingAndGlyphs">04. Jan</text>
<line x1="1029.80" y1="1488.00" x2="1029.80" y2="1506.00" stroke="#ccd6eb" stroke-width="2.00" />
<text x="988.12" y="1528.50" font-size="27.40" fill="#666666" textLength="83.07" lengthAdjust="spacingAndGlyphs">18. Jan</text>
<line x1="1227.80" y1="1488.00" x2="1227.80" y2="1506.00" stroke="#ccd6eb" stroke-width="2.00" />
<text x="1183.89" y="1528.50" font-size="27.40" fill="#666666" textLength="87.90" lengthAdjust="spacingAndGlyphs">01. Feb</text>
<line x1="1421.80" y1="1488.00" x2="1421.80" y2="1506.00" stroke="#ccd6eb" stroke-width="2.00" />
<text x="1376.90" y="1528.50" font-size="27.40" fill="#666666" textLength="88.90" lengthAdjust="spacingAndGlyphs">15. Feb</text>
<rect x="224" y="1590" width="1424.5" height="80" fill="#d3dae9"/>
<line x1="278.30" y1="1590.00" x2="278.30" y2="1670.00" stroke="#c3c8d2" stroke-width="1.30" />
<line x1="772.60" y1="1590.00" x2="772.60" y2="1670.00" stroke="#c3c8d2" stroke-width="1.30" />
<line x1="1249.60" y1="1590.00" x2="1249.60" y2="1670.00" stroke="#c3c8d2" stroke-width="1.30" />
<path d="M224,1668 L1600,1666 L1648,1669" fill="none" stroke="#9fc070" stroke-width="2.00" stroke-linejoin="round" />
<path d="M224.5,1654.1 C233.6,1653.0 260.2,1649.2 278.8,1647.3 C297.4,1645.4 315.7,1643.8 335.9,1642.8 C356.1,1641.8 383.2,1641.8 400.0,1641.5 C416.8,1641.2 424.4,1641.5 436.4,1641.1 C448.3,1640.7 461.1,1640.1 471.7,1639.2 C482.3,1638.3 490.9,1636.5 500.0,1635.5 C509.1,1634.5 508.1,1633.6 526.0,1632.9 C543.9,1632.2 571.4,1632.0 607.6,1631.5 C643.9,1631.0 714.1,1630.9 743.5,1630.2 C772.9,1629.5 771.5,1628.5 784.2,1627.5 C797.0,1626.5 808.7,1625.4 820.0,1624.5 C831.3,1623.6 838.9,1622.8 852.2,1622.3 C865.5,1621.8 874.7,1621.5 900.0,1621.5 C925.3,1621.5 982.3,1623.1 1004.0,1622.6 C1025.7,1622.1 1019.6,1619.9 1030.0,1618.5 C1040.4,1617.1 1055.1,1615.1 1066.3,1614.2 C1077.5,1613.4 1066.5,1613.5 1097.0,1613.3 C1127.5,1613.1 1210.8,1613.1 1249.6,1613.3 C1288.4,1613.5 1309.9,1614.7 1330.0,1614.2 C1350.1,1613.8 1357.0,1611.9 1370.0,1610.5 C1383.0,1609.1 1391.3,1607.3 1408.0,1606.0 C1424.7,1604.7 1448.3,1603.5 1470.0,1602.5 C1491.7,1601.5 1524.7,1600.2 1538.4,1600.3 C1552.1,1600.4 1547.6,1601.3 1552.0,1603.0 C1556.4,1604.7 1549.1,1600.5 1565.0,1610.5 C1580.9,1620.5 1633.8,1654.2 1647.5,1663.0" fill="none" stroke="#d8a850" stroke-width="2.20" stroke-linejoin="round" />
<path d="M224.5,1649.6 C233.6,1648.5 260.2,1644.7 278.8,1642.8 C297.4,1640.9 315.7,1639.3 335.9,1638.3 C356.1,1637.3 383.2,1637.3 400.0,1637.0 C416.8,1636.7 424.4,1637.0 436.4,1636.6 C448.3,1636.2 461.1,1635.6 471.7,1634.7 C482.3,1633.8 490.9,1632.0 500.0,1631.0 C509.1,1630.0 508.1,1629.1 526.0,1628.4 C543.9,1627.7 571.4,1627.5 607.6,1627.0 C643.9,1626.5 714.1,1626.4 743.5,1625.7 C772.9,1625.0 771.5,1624.0 784.2,1623.0 C797.0,1622.0 808.7,1620.9 820.0,1620.0 C831.3,1619.1 838.9,1618.3 852.2,1617.8 C865.5,1617.3 874.7,1617.0 900.0,1617.0 C925.3,1617.0 982.3,1618.6 1004.0,1618.1 C1025.7,1617.6 1019.6,1615.4 1030.0,1614.0 C1040.4,1612.6 1055.1,1610.6 1066.3,1609.8 C1077.5,1608.9 1066.5,1609.0 1097.0,1608.8 C1127.5,1608.6 1210.8,1608.6 1249.6,1608.8 C1288.4,1609.0 1309.9,1610.2 1330.0,1609.8 C1350.1,1609.3 1357.0,1607.4 1370.0,1606.0 C1383.0,1604.6 1391.3,1602.8 1408.0,1601.5 C1424.7,1600.2 1448.3,1599.0 1470.0,1598.0 C1491.7,1597.0 1524.7,1595.7 1538.4,1595.8 C1552.1,1595.9 1547.6,1596.8 1552.0,1598.5 C1556.4,1600.2 1549.1,1595.8 1565.0,1606.0 C1580.9,1616.2 1633.8,1651.0 1647.5,1660.0" fill="none" stroke="#7fb8e8" stroke-width="2.20" stroke-linejoin="round" />
<text x="284.55" y="1660.20" font-size="22.60" fill="#8e95a2" textLength="75.92" lengthAdjust="spacingAndGlyphs">Dec &#x27;14</text>
<text x="778.45" y="1660.20" font-size="22.60" fill="#8e95a2" textLength="72.17" lengthAdjust="spacingAndGlyphs">Jan &#x27;15</text>
<text x="1257.05" y="1660.20" font-size="22.60" fill="#8e95a2" textLength="74.67" lengthAdjust="spacingAndGlyphs">Feb &#x27;15</text>
<rect x="224" y="1590" width="1424.5" height="80" fill="none" stroke="#c6c6c6" stroke-width="1.6"/>
<rect x="216.20" y="1614.20" width="15.70" height="29.10" fill="#f2f2f2" stroke="#999" stroke-width="1.4"/>
<line x1="221.85" y1="1621.12" x2="221.85" y2="1636.38" stroke="#999" stroke-width="1.40" />
<line x1="226.25" y1="1621.12" x2="226.25" y2="1636.38" stroke="#999" stroke-width="1.40" />
<rect x="1640.00" y="1614.10" width="15.90" height="29.60" fill="#f2f2f2" stroke="#999" stroke-width="1.4"/>
<line x1="1645.75" y1="1621.15" x2="1645.75" y2="1636.65" stroke="#999" stroke-width="1.40" />
<line x1="1650.15" y1="1621.15" x2="1650.15" y2="1636.65" stroke="#999" stroke-width="1.40" />
<g fill="#7fa8e6" fill-opacity="0.85"><circle cx="1647.95" cy="1692.65" r="1.1"/><circle cx="1649.90" cy="1690.70" r="1.1"/><circle cx="1651.85" cy="1688.75" r="1.1"/><circle cx="1651.85" cy="1692.65" r="1.1"/><circle cx="1653.80" cy="1686.80" r="1.1"/><circle cx="1653.80" cy="1690.70" r="1.1"/><circle cx="1655.75" cy="1684.85" r="1.1"/><circle cx="1655.75" cy="1688.75" r="1.1"/><circle cx="1655.75" cy="1692.65" r="1.1"/><circle cx="1657.70" cy="1682.90" r="1.1"/><circle cx="1657.70" cy="1686.80" r="1.1"/><circle cx="1657.70" cy="1690.70" r="1.1"/><circle cx="1659.65" cy="1680.95" r="1.1"/><circle cx="1659.65" cy="1684.85" r="1.1"/><circle cx="1659.65" cy="1688.75" r="1.1"/><circle cx="1659.65" cy="1692.65" r="1.1"/></g>
<rect x="2312.2" y="1025" width="31.6" height="18" rx="9" fill="#9bd2f0"/>
<text x="2354.67" y="1041.00" font-size="28.40" font-weight="bold" fill="#2c3644" textLength="233.85" lengthAdjust="spacingAndGlyphs">total_conversions</text>
<line x1="2163.00" y1="1089.00" x2="2163.00" y2="1546.50" stroke="#e3e3e3" stroke-width="1.50" />
<line x1="2293.00" y1="1089.00" x2="2293.00" y2="1546.50" stroke="#e3e3e3" stroke-width="1.50" />
<line x1="2421.50" y1="1089.00" x2="2421.50" y2="1546.50" stroke="#e3e3e3" stroke-width="1.50" />
<line x1="2551.00" y1="1089.00" x2="2551.00" y2="1546.50" stroke="#e3e3e3" stroke-width="1.50" />
<line x1="2681.00" y1="1089.00" x2="2681.00" y2="1546.50" stroke="#e3e3e3" stroke-width="1.50" />
<line x1="2811.00" y1="1089.00" x2="2811.00" y2="1546.50" stroke="#e3e3e3" stroke-width="1.50" />
<line x1="2939.50" y1="1089.00" x2="2939.50" y2="1546.50" stroke="#e3e3e3" stroke-width="1.50" />
<line x1="3069.00" y1="1089.00" x2="3069.00" y2="1546.50" stroke="#e3e3e3" stroke-width="1.50" />
<line x1="3201.20" y1="1089.00" x2="3201.20" y2="1546.50" stroke="#e3e3e3" stroke-width="1.50" />
<rect x="2034.00" y="1108.85" width="1031.80" height="23.70" fill="#9bd2f0" />
<line x1="2014.00" y1="1121.70" x2="2033.00" y2="1121.70" stroke="#ccd6eb" stroke-width="2.00" />
<text x="1898.60" y="1129.30" font-size="27.00" fill="#666666" textLength="105.77" lengthAdjust="spacingAndGlyphs">Rewards</text>
<rect x="2034.00" y="1174.95" width="926.00" height="23.70" fill="#9bd2f0" />
<line x1="2014.00" y1="1187.80" x2="2033.00" y2="1187.80" stroke="#ccd6eb" stroke-width="2.00" />
<text x="1700.12" y="1195.40" font-size="27.00" fill="#666666" textLength="304.01" lengthAdjust="spacingAndGlyphs">More artists, more music</text>
<rect x="2034.00" y="1241.05" width="837.80" height="23.70" fill="#9bd2f0" />
<line x1="2014.00" y1="1253.90" x2="2033.00" y2="1253.90" stroke="#ccd6eb" stroke-width="2.00" />
<text x="1758.68" y="1261.50" font-size="27.00" fill="#666666" textLength="245.91" lengthAdjust="spacingAndGlyphs">30% off Limited Sale</text>
<rect x="2034.00" y="1305.15" width="196.00" height="23.70" fill="#9bd2f0" />
<line x1="2014.00" y1="1318.00" x2="2033.00" y2="1318.00" stroke="#ccd6eb" stroke-width="2.00" />
<text x="1870.79" y="1325.60" font-size="27.00" fill="#666666" textLength="133.08" lengthAdjust="spacingAndGlyphs">Newsletter</text>
<rect x="2034.00" y="1371.15" width="178.00" height="23.70" fill="#9bd2f0" />
<line x1="2014.00" y1="1384.00" x2="2033.00" y2="1384.00" stroke="#ccd6eb" stroke-width="2.00" />
<text x="1906.25" y="1391.60" font-size="27.00" fill="#666666" textLength="97.35" lengthAdjust="spacingAndGlyphs">Account</text>
<rect x="2034.00" y="1437.15" width="148.00" height="23.70" fill="#9bd2f0" />
<line x1="2014.00" y1="1450.00" x2="2033.00" y2="1450.00" stroke="#ccd6eb" stroke-width="2.00" />
<text x="1951.28" y="1457.60" font-size="27.00" fill="#666666" textLength="53.98" lengthAdjust="spacingAndGlyphs">Trial</text>
<rect x="2034.00" y="1502.95" width="130.00" height="23.70" fill="#9bd2f0" />
<line x1="2014.00" y1="1515.80" x2="2033.00" y2="1515.80" stroke="#ccd6eb" stroke-width="2.00" />
<text x="1931.15" y="1523.40" font-size="27.00" fill="#666666" textLength="72.72" lengthAdjust="spacingAndGlyphs">Order</text>
<line x1="2033.00" y1="1089.00" x2="2033.00" y2="1546.50" stroke="#ccd6eb" stroke-width="2.00" />
<text x="2027.47" y="1585.20" font-size="22.40" fill="#666666" textLength="12.46" lengthAdjust="spacingAndGlyphs">0</text>
<text x="2138.34" y="1585.20" font-size="22.40" fill="#666666" textLength="48.57" lengthAdjust="spacingAndGlyphs">100k</text>
<text x="2268.13" y="1585.20" font-size="22.40" fill="#666666" textLength="48.57" lengthAdjust="spacingAndGlyphs">200k</text>
<text x="2397.87" y="1585.20" font-size="22.40" fill="#666666" textLength="48.57" lengthAdjust="spacingAndGlyphs">300k</text>
<text x="2526.94" y="1585.20" font-size="22.40" fill="#666666" textLength="48.57" lengthAdjust="spacingAndGlyphs">400k</text>
<text x="2656.25" y="1585.20" font-size="22.40" fill="#666666" textLength="48.57" lengthAdjust="spacingAndGlyphs">500k</text>
<text x="2786.13" y="1585.20" font-size="22.40" fill="#666666" textLength="48.57" lengthAdjust="spacingAndGlyphs">600k</text>
<text x="2915.12" y="1585.20" font-size="22.40" fill="#666666" textLength="48.57" lengthAdjust="spacingAndGlyphs">700k</text>
<text x="3044.71" y="1585.20" font-size="22.40" fill="#666666" textLength="48.57" lengthAdjust="spacingAndGlyphs">800k</text>
<text x="3150.39" y="1585.20" font-size="22.40" fill="#666666" textLength="48.57" lengthAdjust="spacingAndGlyphs">900k</text>
<text x="2510.59" y="1659.00" font-size="27.00" fill="#2c3644" textLength="212.10" lengthAdjust="spacingAndGlyphs">total_conversions</text>
<g fill="#7fa8e6" fill-opacity="0.85"><circle cx="3198.95" cy="1692.65" r="1.1"/><circle cx="3200.90" cy="1690.70" r="1.1"/><circle cx="3202.85" cy="1688.75" r="1.1"/><circle cx="3202.85" cy="1692.65" r="1.1"/><circle cx="3204.80" cy="1686.80" r="1.1"/><circle cx="3204.80" cy="1690.70" r="1.1"/><circle cx="3206.75" cy="1684.85" r="1.1"/><circle cx="3206.75" cy="1688.75" r="1.1"/><circle cx="3206.75" cy="1692.65" r="1.1"/><circle cx="3208.70" cy="1682.90" r="1.1"/><circle cx="3208.70" cy="1686.80" r="1.1"/><circle cx="3208.70" cy="1690.70" r="1.1"/><circle cx="3210.65" cy="1680.95" r="1.1"/><circle cx="3210.65" cy="1684.85" r="1.1"/><circle cx="3210.65" cy="1688.75" r="1.1"/><circle cx="3210.65" cy="1692.65" r="1.1"/></g>
<rect x="0.00" y="0.00" width="124.00" height="1698.00" fill="#222222" />
<g transform="translate(20,35)" fill="none" stroke-width="2.8" stroke-linejoin="round" stroke-linecap="round"><path d="M32.5,28 L22.4,18.5 L22.4,8.5 L38.6,25.5 L55.3,8.5 L55.3,18.5 L45.5,28" stroke="#c5dc6e"/><path d="M27,33.5 L17.5,23.5 L8.5,23.5 L25.5,39.5 L8.5,56.5 L18,56.5 L27,46.5" stroke="#f0a040"/><path d="M50,33.5 L59.5,23.5 L69.5,23.5 L52.5,39.5 L69.5,56.5 L59.5,56.5 L50,46.5" stroke="#9b6bb5"/><path d="M33,50.5 L22.5,61 L22.5,70.5 L38.6,55.5 L55.3,70.5 L55.3,61 L45.5,51 M38.6,49.5 L38.6,55.5" stroke="#9fd8f5"/><circle cx="38.6" cy="39.3" r="8.1" stroke="#9fd8f5" stroke-width="2.6" stroke-dasharray="1.2,1.35" stroke-linecap="butt"/></g>
<g fill="none" stroke="#5d6167" stroke-width="3.6" stroke-linejoin="round"><rect x="32.6" y="202.8" width="21.6" height="21.6" rx="3.5"/><rect x="62.8" y="202.8" width="22.3" height="21.6" rx="3.5"/><rect x="32.6" y="233" width="21.6" height="22.3" rx="3.5"/><rect x="62.8" y="233" width="22.3" height="22.3" rx="3.5"/></g>
<g fill="none" stroke="#5d6167" stroke-width="3.6" stroke-linejoin="round"><rect x="33.1" y="331.2" width="51.9" height="51.9" rx="5"/><path d="M43.45,377 V364.9 M53.75,377 V351 M63.4,377 V341.1 M72.9,377 V349.6" stroke-width="3.5"/></g>
<g fill="#5d6167"><rect x="34.0" y="457.08" width="7.1" height="2.85"/><rect x="45.5" y="457.08" width="7.4" height="2.85"/><rect x="57.0" y="457.08" width="6.9" height="2.85"/><rect x="68.3" y="457.08" width="7.5" height="2.85"/><rect x="34.0" y="464.28" width="7.1" height="2.85"/><rect x="45.5" y="464.28" width="7.4" height="2.85"/><rect x="57.0" y="464.28" width="6.9" height="2.85"/><rect x="68.3" y="464.28" width="7.5" height="2.85"/><rect x="34.0" y="471.58" width="7.1" height="2.85"/><rect x="45.5" y="471.58" width="7.4" height="2.85"/><rect x="57.0" y="471.58" width="6.9" height="2.85"/><rect x="68.3" y="471.58" width="7.5" height="2.85"/><rect x="34.0" y="478.88" width="7.1" height="2.85"/><rect x="45.5" y="478.88" width="7.4" height="2.85"/><rect x="34.0" y="485.98" width="7.1" height="2.85"/><rect x="45.5" y="485.98" width="5.0" height="2.85"/><rect x="34.0" y="493.08" width="7.1" height="2.85"/><rect x="45.5" y="493.08" width="5.0" height="2.85"/><rect x="59" y="485.3" width="3.9" height="16.8"/><rect x="65" y="491" width="3.8" height="11.1"/><rect x="70.9" y="488.4" width="3.9" height="13.7"/></g>
<circle cx="66.8" cy="493.6" r="16.5" fill="#222222"/>
<g fill="none"><rect x="34.0" y="457.08" width="7.1" height="2.85"/><rect x="45.5" y="457.08" width="7.4" height="2.85"/><rect x="57.0" y="457.08" width="6.9" height="2.85"/><rect x="68.3" y="457.08" width="7.5" height="2.85"/><rect x="34.0" y="464.28" width="7.1" height="2.85"/><rect x="45.5" y="464.28" width="7.4" height="2.85"/><rect x="57.0" y="464.28" width="6.9" height="2.85"/><rect x="68.3" y="464.28" width="7.5" height="2.85"/><rect x="34.0" y="471.58" width="7.1" height="2.85"/><rect x="45.5" y="471.58" width="7.4" height="2.85"/><rect x="57.0" y="471.58" width="6.9" height="2.85"/><rect x="68.3" y="471.58" width="7.5" height="2.85"/><rect x="34.0" y="478.88" width="7.1" height="2.85"/><rect x="45.5" y="478.88" width="7.4" height="2.85"/><rect x="34.0" y="485.98" width="7.1" height="2.85"/><rect x="45.5" y="485.98" width="5.0" height="2.85"/><rect x="34.0" y="493.08" width="7.1" height="2.85"/><rect x="45.5" y="493.08" width="5.0" height="2.85"/></g>
<g fill="#5d6167"><rect x="59" y="485.3" width="3.9" height="16.8"/><rect x="65" y="491" width="3.8" height="11.1"/><rect x="70.9" y="488.4" width="3.9" height="13.7"/></g>
<circle cx="66.8" cy="493.6" r="15.35" fill="none" stroke="#5d6167" stroke-width="3.3"/>
<line x1="56.00" y1="507.00" x2="51.80" y2="511.60" stroke="#5d6167" stroke-width="3.30" />
<g fill="none" stroke="#5d6167" stroke-width="3.6" stroke-linejoin="round"><path d="M57.75,586.9 L38,586.9 Q32.95,586.9 32.95,592 L32.95,634 Q32.95,639 38,639 L80,639 Q85.1,639 85.1,634 L85.1,613.85"/><circle cx="72.7" cy="599.4" r="12.4"/><path d="M72.85,592.2 V599.1" stroke-width="3.3"/><path d="M39.4,622.4 L42.5,628.3 L49.5,615.9 L60.6,632.2 L66,622.9 L72.5,633.7 L79.4,621.8" stroke-width="3.5" stroke-linejoin="miter"/><circle cx="49.2" cy="610.5" r="5.15" stroke-width="3.1"/></g>
<circle cx="72.7" cy="604.3" r="2.6" fill="#5d6167"/>
<g fill="none" stroke="#5d6167" stroke-width="3.6" stroke-linejoin="round"><rect x="33" y="714.95" width="51.95" height="52.15" rx="5"/><circle cx="50.3" cy="731.8" r="9.9" stroke-width="3.4"/><path d="M50.3,723 V731.3 L55.2,737.8" stroke-width="3.4"/></g>
<g fill="#5d6167"><rect x="65" y="726.9" width="10" height="3.1"/><rect x="65" y="732.9" width="12.9" height="3.1"/><rect x="39.3" y="750.1" width="3.75" height="11.6"/><rect x="46.1" y="754.0" width="3.75" height="7.7"/><rect x="53.1" y="746.0" width="3.75" height="15.7"/><rect x="60.1" y="751.4" width="3.75" height="10.3"/><rect x="67.0" y="748.9" width="3.75" height="12.8"/><rect x="74.0" y="751.4" width="3.75" height="10.3"/></g>
<g fill="none" stroke="#5d6167" stroke-width="3.6" stroke-linejoin="round"><path d="M53.1,864.2 L40,864.2 Q34.5,864.2 34.5,869.7 L34.5,886.6 Q34.5,892.1 40,892.1 L69,892.1 Q74.5,892.1 74.5,886.6 L74.5,869.7 Q74.5,864.2 69,864.2 L68.3,864.2" stroke-linecap="round"/><path d="M44.9,851 V857.5" stroke-linecap="round"/><path d="M67.3,857 L79.4,857 Q83.4,857 83.4,853 L83.4,843.9 Q83.4,839.9 79.4,839.9 L65,839.9 Q61,839.9 61,843.9 L61,862.5 Z" stroke-width="3.5"/></g>
<g fill="#5d6167"><circle cx="44.9" cy="848.4" r="3.5"/><circle cx="45.6" cy="873.9" r="2.7"/><circle cx="63.4" cy="873.9" r="2.7"/></g>
<g fill="none" stroke="#5d6167" stroke-width="3.6" stroke-linejoin="round"><rect x="33" y="971" width="52" height="51.5" rx="5"/></g>
<g fill="#5d6167"><circle cx="48" cy="997" r="3"/><circle cx="59" cy="997" r="3"/><circle cx="70" cy="997" r="3"/></g>
<line x1="6.00" y1="1097.00" x2="113.00" y2="1097.00" stroke="#3b3b3b" stroke-width="1.30" />
<circle cx="58.9" cy="1171" r="25.5" fill="none" stroke="#5d6167" stroke-width="4.8"/>
<path d="M51.9,1164.3 C51.9,1156 65.8,1155.5 65.8,1164 C65.8,1169 58.9,1170 58.9,1177.5" fill="none" stroke="#5d6167" stroke-width="4.6" stroke-linecap="round"/>
<circle cx="58.9" cy="1185.2" r="2.5" fill="#5d6167"/>
<rect x="34.90" y="1451.90" width="48.30" height="47.90" fill="#5d6167" />
<polygon points="49.7,1457.8 68.8,1457.8 62.4,1467.1 69.2,1486.6 59,1496 49.2,1486.6 55.9,1467.1" fill="#222222"/>
<circle cx="59" cy="1621.9" r="33" fill="#5d6167"/>
<path d="M42,1646 Q37,1646 37,1641 L37,1635 C37,1626 42,1620.5 50,1619.7 C54,1623 64,1623 68,1619.7 C76,1620.5 81,1626 81,1635 L81,1641 Q81,1646 76,1646 Z" fill="#222222"/>
<circle cx="59" cy="1610" r="11.9" fill="#222222" stroke="#5d6167" stroke-width="1.6"/>
<text x="7.54" y="288.90" font-size="18.60" fill="#9ca1a9" textLength="102.24" lengthAdjust="spacingAndGlyphs">Dashboards</text>
<text x="26.02" y="416.90" font-size="18.60" fill="#9ca1a9" textLength="66.75" lengthAdjust="spacingAndGlyphs">Widgets</text>
<text x="26.01" y="544.90" font-size="18.60" fill="#9ca1a9" textLength="65.97" lengthAdjust="spacingAndGlyphs">Queries</text>
<text x="35.26" y="672.90" font-size="18.60" fill="#9ca1a9" textLength="48.32" lengthAdjust="spacingAndGlyphs">Alerts</text>
<text x="25.65" y="800.90" font-size="18.60" fill="#9ca1a9" textLength="66.03" lengthAdjust="spacingAndGlyphs">Reports</text>
<text x="51.21" y="928.90" font-size="18.60" fill="#9ca1a9" textLength="17.44" lengthAdjust="spacingAndGlyphs">AI</text>
<text x="35.75" y="1056.90" font-size="18.60" fill="#9ca1a9" textLength="45.95" lengthAdjust="spacingAndGlyphs">More</text>
<text x="38.60" y="1231.00" font-size="18.60" fill="#9ca1a9" textLength="40.23" lengthAdjust="spacingAndGlyphs">Help</text>
<text x="32.93" y="1531.00" font-size="18.60" fill="#9ca1a9" textLength="52.06" lengthAdjust="spacingAndGlyphs">Knowi</text>
<text x="32.36" y="1551.50" font-size="18.60" fill="#9ca1a9" textLength="54.69" lengthAdjust="spacingAndGlyphs">Admin</text>
<defs><linearGradient id="bg1" x1="0" y1="0" x2="0" y2="1"><stop offset="0" stop-color="#000" stop-opacity="0"/><stop offset="1" stop-color="#000" stop-opacity="0.035"/></linearGradient></defs>
<rect x="124.00" y="1630.00" width="3100.00" height="68.00" fill="url(#bg1)" /></svg></body></html>
